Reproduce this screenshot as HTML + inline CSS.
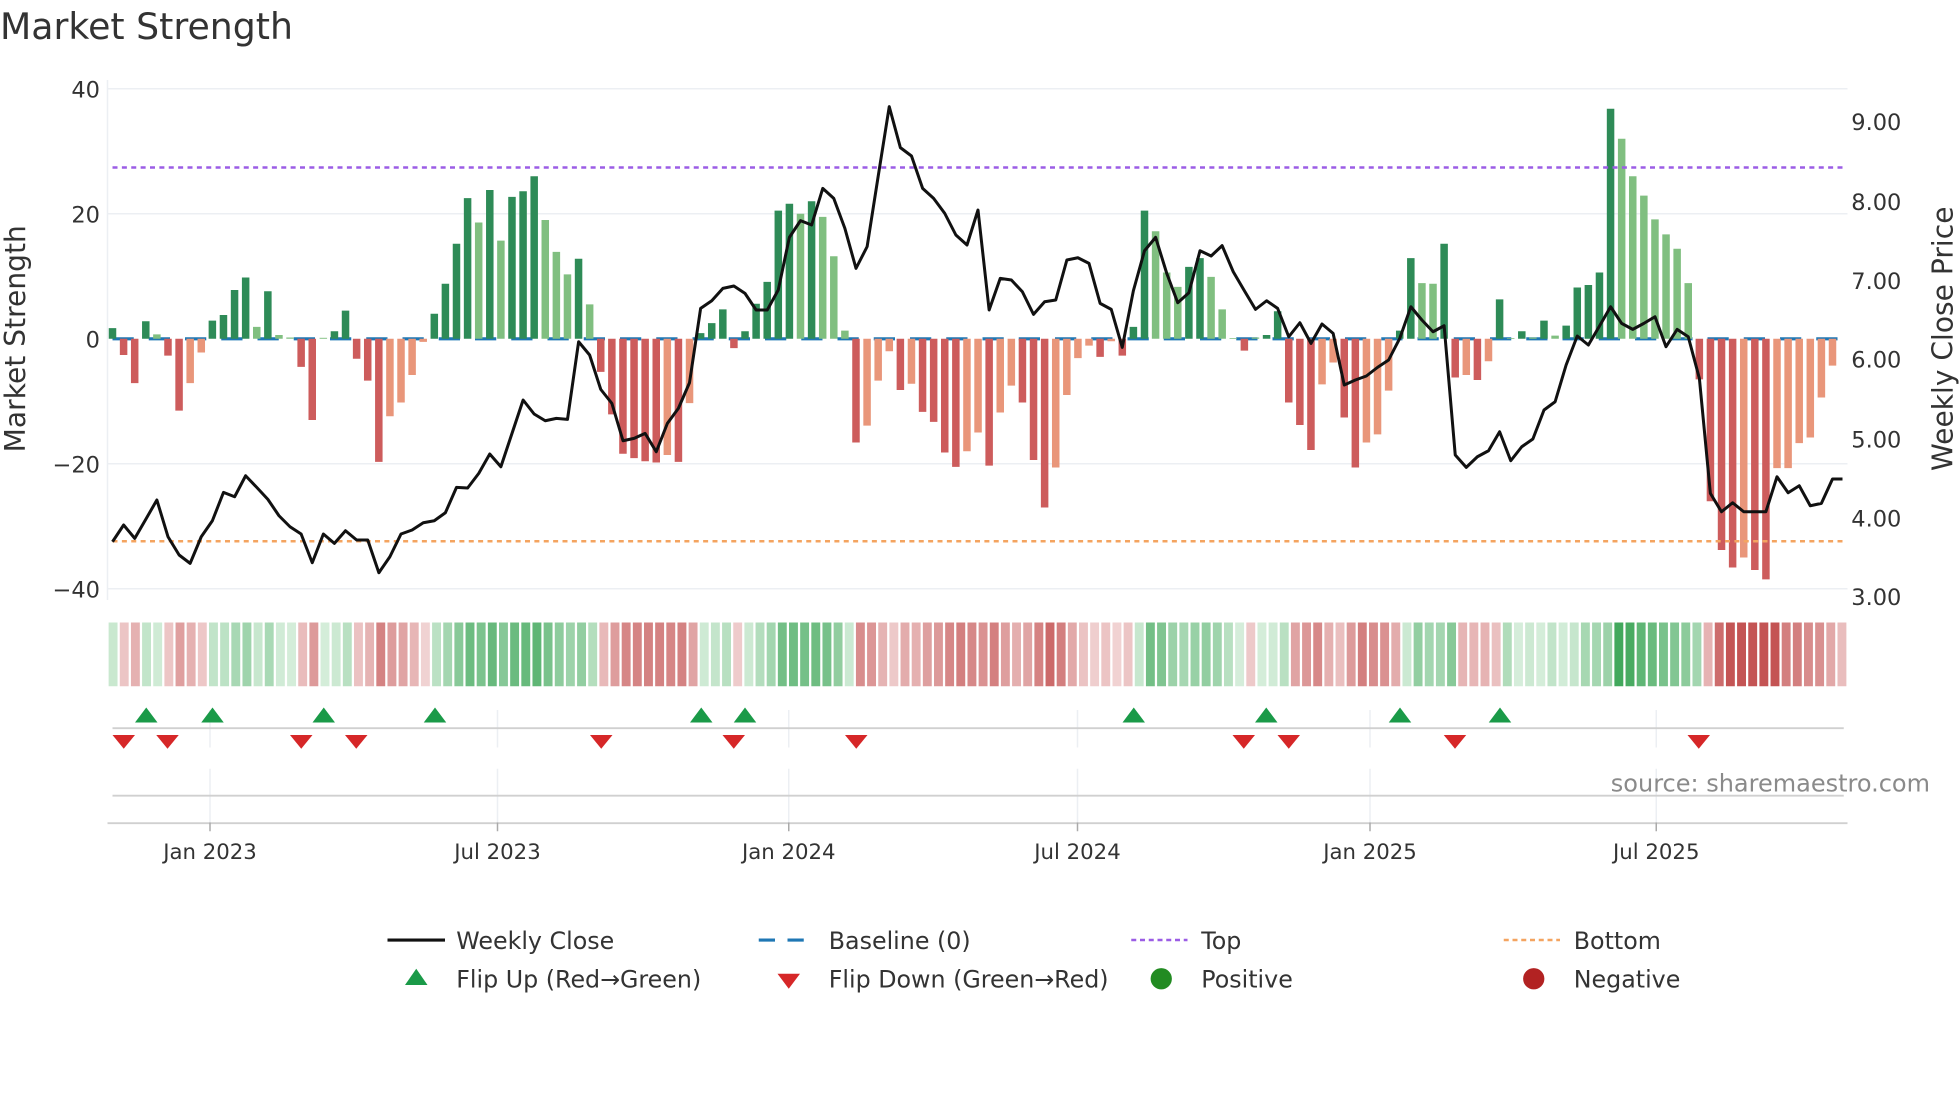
<!DOCTYPE html>
<html><head><meta charset="utf-8"><style>
html,body{margin:0;padding:0;background:#fff;width:1960px;height:1102px;overflow:hidden}
svg{display:block}
text{font-family:"DejaVu Sans","Liberation Sans",sans-serif;fill:#333}
</style></head><body>
<svg id="s" width="1960" height="1102" viewBox="0 0 1568 881.6" xmlns="http://www.w3.org/2000/svg">
<rect width="1568" height="882" fill="#fff"/>
<text x="0" y="31" font-size="29">Market Strength</text>
<g stroke="#eceff3" stroke-width="1.2">
<line x1="86" x2="1478" y1="71" y2="71"/><line x1="86" x2="1478" y1="171" y2="171"/>
<line x1="86" x2="1478" y1="371" y2="371"/><line x1="86" x2="1478" y1="471" y2="471"/>
<line x1="86" x2="86" y1="64" y2="480"/>
</g>
<g font-size="18" text-anchor="end">
<text x="80" y="78">40</text><text x="80" y="178">20</text><text x="80" y="278">0</text>
<text x="80" y="378">−20</text><text x="80" y="478">−40</text>
</g>
<g font-size="18">
<text x="1481" y="104">9.00</text><text x="1481" y="168">8.00</text><text x="1481" y="231">7.00</text>
<text x="1481" y="294">6.00</text><text x="1481" y="358">5.00</text><text x="1481" y="421">4.00</text>
<text x="1481" y="484">3.00</text>
</g>
<text font-size="22.5" text-anchor="middle" transform="translate(20,271) rotate(-90)">Market Strength</text>
<text font-size="22.5" text-anchor="middle" transform="translate(1562,271) rotate(-90)">Weekly Close Price</text>
<line x1="90" x2="1476" y1="271" y2="271" stroke="#1f77b4" stroke-width="2.5" stroke-dasharray="17,12"/>
<g id="bars"></g>
<line x1="90" x2="1476" y1="134" y2="134" stroke="#9b5de5" stroke-width="2" stroke-dasharray="4,3.5"/>
<line x1="90" x2="1476" y1="433" y2="433" stroke="#f4a460" stroke-width="2" stroke-dasharray="4,3.5"/>
<polyline id="price" fill="none" stroke="#111" stroke-width="2.4" stroke-linejoin="round"/>
<g id="strip"></g>
<g stroke="#eceff3" stroke-width="1.2">
<line x1="168" x2="168" y1="568" y2="598"/><line x1="398" x2="398" y1="568" y2="598"/><line x1="631" x2="631" y1="568" y2="598"/><line x1="862" x2="862" y1="568" y2="598"/><line x1="1096" x2="1096" y1="568" y2="598"/><line x1="1325" x2="1325" y1="568" y2="598"/>
<line x1="168" x2="168" y1="615" y2="658"/><line x1="398" x2="398" y1="615" y2="658"/><line x1="631" x2="631" y1="615" y2="658"/><line x1="862" x2="862" y1="615" y2="658"/><line x1="1096" x2="1096" y1="615" y2="658"/><line x1="1325" x2="1325" y1="615" y2="658"/>
</g>
<line x1="90" x2="1475" y1="582.5" y2="582.5" stroke="#d0d0d0" stroke-width="1.5"/>
<line x1="90" x2="1475" y1="636.5" y2="636.5" stroke="#d0d0d0" stroke-width="1.5"/>
<line x1="86" x2="1478" y1="658.5" y2="658.5" stroke="#d0d0d0" stroke-width="1.5"/>
<g stroke="#aaa" stroke-width="1.2">
<line x1="168" x2="168" y1="658" y2="665"/><line x1="398" x2="398" y1="658" y2="665"/><line x1="631" x2="631" y1="658" y2="665"/><line x1="862" x2="862" y1="658" y2="665"/><line x1="1096" x2="1096" y1="658" y2="665"/><line x1="1325" x2="1325" y1="658" y2="665"/>
</g>
<g id="flips"></g>
<text x="1544" y="633" font-size="19.2" text-anchor="end" style="fill:#8a8a8a">source: sharemaestro.com</text>
<g font-size="17" text-anchor="middle">
<text x="168" y="687">Jan 2023</text><text x="398" y="687">Jul 2023</text><text x="631" y="687">Jan 2024</text>
<text x="862" y="687">Jul 2024</text><text x="1096" y="687">Jan 2025</text><text x="1325" y="687">Jul 2025</text>
</g>
<g font-size="19">
<line x1="310" x2="356" y1="752" y2="752" stroke="#111" stroke-width="2.5"/>
<text x="365" y="759">Weekly Close</text>
<line x1="607" x2="652" y1="752" y2="752" stroke="#1f77b4" stroke-width="2.5" stroke-dasharray="13,10"/>
<text x="663" y="759">Baseline (0)</text>
<line x1="905" x2="950" y1="752" y2="752" stroke="#9b5de5" stroke-width="2" stroke-dasharray="4,3"/>
<text x="961" y="759">Top</text>
<line x1="1203" x2="1248" y1="752" y2="752" stroke="#f4a460" stroke-width="2" stroke-dasharray="4,3"/>
<text x="1259" y="759">Bottom</text>
<polygon points="324,788 342,788 333,775" fill="#1a9a48"/>
<text x="365" y="790">Flip Up (Red→Green)</text>
<polygon points="622,779 640,779 631,791" fill="#d62728"/>
<text x="663" y="790">Flip Down (Green→Red)</text>
<circle cx="929" cy="783" r="8.5" fill="#228b22"/>
<text x="961" y="790">Positive</text>
<circle cx="1227" cy="783" r="8.5" fill="#b22222"/>
<text x="1259" y="790">Negative</text>
</g>
</svg>
<script>
var D="1.7G -2.6R -7.1R 2.8G 0.7g -2.7R -11.5R -7.1r -2.2r 2.9G 3.8G 7.8G 9.8G 1.9g 7.6G 0.6g 0.2g -4.5R -13R 0.15g 1.2G 4.5G -3.2R -6.7R -19.7R -12.4r -10.2r -5.8r -0.5r 4G 8.8G 15.2G 22.5G 18.6g 23.8G 15.7g 22.7G 23.6G 26G 19g 13.9g 10.3g 12.8G 5.5g -5.3R -12.1R -18.4R -19.1R -19.6R -19.8R -18.6r -19.7R -10.3r "+
"0.9G 2.5G 4.7G -1.5R 1.2G 5.6G 9.1G 20.5G 21.6G 20g 22G 19.5g 13.2g 1.3g -16.6R -13.9r -6.7r -2r -8.2R -7.2r -11.7R -13.3R -18.2R -20.5R -18r -15r -20.3R -11.8r -7.5r -10.2R -19.4R -27R -20.6r -9r -3.1r -1.1r -2.9R -0.4r -2.7R 1.9G 20.5G 17.2g 10.6g 8.3g 11.5G 12.9G 9.9g 4.7g 0.1g -1.9R 0.2g 0.6G 4.4G -10.2R "+
"-13.8R -17.8R -7.3r -3.8r -12.6R -20.6R -16.6r -15.3r -8.3r 1.3G 12.9G 8.9g 8.8g 15.2G -6.2R -5.8r -6.6R -3.6r 6.3G 0.1g 1.2G 0.2g 2.9G 0.5g 2.1G 8.2G 8.6G 10.6G 36.8G 32g 26g 22.9g 19.1g 16.7g 14.4g 8.9g -6.5R -26R -33.8R -36.6R -35r -37R -38.5R -20.7r -20.7r -16.7r -15.8r -9.4r -4.3r";
var B=D.trim().split(/\s+/).map(function(t){return{v:parseFloat(t),c:t.slice(-1)}});
var Z=[1385,1335,1375,1318,1260,1370,1425,1450,1370,1322,1237,1250,1187,1222,1258,1307,1340,1362,1448,1362,1390,1352,1380,1380,1478,1430,1362,1350,1328,1322,1298,1222,1224,1180,1122,1160,1060,960,1002,1022,1015,1018,785,825,928,970,1082,1075,1060,1115,1030,985,908,
685,662,625,618,640,690,690,630,472,422,435,325,355,445,565,500,290,80,203,228,325,355,400,465,495,390,690,595,600,635,703,665,660,540,533,550,670,688,802,632,512,472,580,668,638,512,528,497,575,632,688,662,685,770,
728,790,732,760,915,900,888,862,840,775,680,720,755,737,1125,1162,1130,1112,1055,1142,1100,1077,990,965,855,768,795,738,680,730,748,730,710,800,748,770,895,1240,1295,1268,1295,1295,1295,1190,1238,1217,1277,1270,1197,1197];
var ns="http://www.w3.org/2000/svg";
function el(n,a,p){var e=document.createElementNS(ns,n);for(var k in a)e.setAttribute(k,a[k]);p.appendChild(e);return e}
var col={G:"#2e8b57",g:"#80bf80",R:"#cd5c5c",r:"#e9967a"};
var bars=document.getElementById("bars"),strip=document.getElementById("strip");
var step=(1466-90)/155, sstep=1392/156;
function mix(a,b,t){var r=[];for(var i=0;i<3;i++)r.push(Math.round(a[i]+(b[i]-a[i])*t));return"rgb("+r.join(",")+")"}
var pts=[];
B.forEach(function(b,i){
 var x=90+i*step, y0=271, y1=271-b.v*5;
 el("rect",{x:x-3,y:Math.min(y0,y1),width:6,height:Math.max(Math.abs(y1-y0),0.6),fill:col[b.c]},bars);
 var t=Math.min(Math.abs(b.v)/34,1);t=Math.pow(t,0.8);
 var f=b.v>=0?mix([214,238,219],[66,168,92],t):mix([242,214,214],[196,84,84],t);
 el("rect",{x:86+i*sstep+0.9,y:498,width:sstep-1.8,height:51,fill:f},strip);
 if(Z[i]!==undefined)pts.push(x.toFixed(1)+","+(64+Z[i]*0.2667).toFixed(1));
});
pts.push("1474,"+(64+1197*0.2667).toFixed(1));
document.getElementById("price").setAttribute("points",pts.join(" "));
var fl=document.getElementById("flips");
[117,170,259,348,561,596,907,1013,1120,1200].forEach(function(x){el("polygon",{points:(x-9)+",578 "+(x+9)+",578 "+x+",566",fill:"#1a9a48"},fl)});
[99,134,241,285,481,587,685,995,1031,1164,1359].forEach(function(x){el("polygon",{points:(x-9)+",588 "+(x+9)+",588 "+x+",599",fill:"#d62728"},fl)});
</script>
</body></html>
